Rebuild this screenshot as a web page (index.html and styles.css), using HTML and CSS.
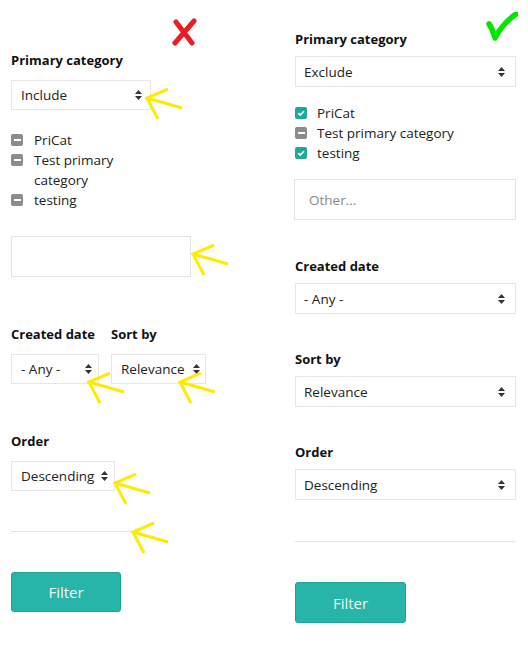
FILE: index.html
```html
<!DOCTYPE html>
<html>
<head>
<meta charset="utf-8">
<link rel="stylesheet" href="styles.css">
</head>
<body>
<div class="page">
  <div class="col col-bad">
    <div class="label">Primary category</div>
    <div class="select sel-include"><span>Include</span><svg class="updown" viewBox="0 0 7 10"><polygon points="0,4 3.5,0 7,4"/><polygon points="0,6 3.5,10 7,6"/></svg></div>
    <ul class="checks checks-bad">
      <li><span class="cb cb-mixed"></span><span>PriCat</span></li>
      <li><span class="cb cb-mixed"></span><span>Test primary category</span></li>
      <li><span class="cb cb-mixed"></span><span>testing</span></li>
    </ul>
    <div class="input input-bad"></div>
    <div class="pair">
      <div class="group">
        <div class="label">Created date</div>
        <div class="select sel-any"><span>- Any -</span><svg class="updown" viewBox="0 0 7 10"><polygon points="0,4 3.5,0 7,4"/><polygon points="0,6 3.5,10 7,6"/></svg></div>
      </div>
      <div class="group">
        <div class="label">Sort by</div>
        <div class="select sel-rel"><span>Relevance</span><svg class="updown" viewBox="0 0 7 10"><polygon points="0,4 3.5,0 7,4"/><polygon points="0,6 3.5,10 7,6"/></svg></div>
      </div>
    </div>
    <div class="label label-order-bad">Order</div>
    <div class="select sel-desc"><span>Descending</span><svg class="updown" viewBox="0 0 7 10"><polygon points="0,4 3.5,0 7,4"/><polygon points="0,6 3.5,10 7,6"/></svg></div>
    <div class="rule rule-bad"></div>
    <button class="btn btn-bad">Filter</button>
  </div>

  <div class="col col-good">
    <div class="label">Primary category</div>
    <div class="select sel-full"><span>Exclude</span><svg class="updown" viewBox="0 0 7 10"><polygon points="0,4 3.5,0 7,4"/><polygon points="0,6 3.5,10 7,6"/></svg></div>
    <ul class="checks checks-good">
      <li><span class="cb cb-checked"><svg viewBox="0 0 12 12"><path d="M3.2 6.2 L5.2 8.1 L8.9 4.2"/></svg></span><span>PriCat</span></li>
      <li><span class="cb cb-mixed"></span><span>Test primary category</span></li>
      <li><span class="cb cb-checked"><svg viewBox="0 0 12 12"><path d="M3.2 6.2 L5.2 8.1 L8.9 4.2"/></svg></span><span>testing</span></li>
    </ul>
    <div class="input input-good">Other...</div>
    <div class="label label-gap">Created date</div>
    <div class="select sel-full"><span>- Any -</span><svg class="updown" viewBox="0 0 7 10"><polygon points="0,4 3.5,0 7,4"/><polygon points="0,6 3.5,10 7,6"/></svg></div>
    <div class="label label-gap2">Sort by</div>
    <div class="select sel-full"><span>Relevance</span><svg class="updown" viewBox="0 0 7 10"><polygon points="0,4 3.5,0 7,4"/><polygon points="0,6 3.5,10 7,6"/></svg></div>
    <div class="label label-gap2">Order</div>
    <div class="select sel-full"><span>Descending</span><svg class="updown" viewBox="0 0 7 10"><polygon points="0,4 3.5,0 7,4"/><polygon points="0,6 3.5,10 7,6"/></svg></div>
    <div class="rule rule-good"></div>
    <button class="btn btn-good">Filter</button>
  </div>

  <svg class="mark mark-x" viewBox="0 0 25 28"><path d="M4 4 L20 25"/><path d="M22 3 L3 25"/></svg>
  <svg class="mark mark-check" viewBox="0 0 32 30"><path d="M3 12 Q6 16 9 26 Q16 12 30 2"/></svg>

  <svg class="arrow a1" viewBox="0 0 38 32"><path d="M23 1 L2 10 L37 20 M2 10 L13 31"/></svg>
  <svg class="arrow a2" viewBox="0 0 38 32"><path d="M23 1 L2 10 L37 20 M2 10 L13 31"/></svg>
  <svg class="arrow a3" viewBox="0 0 38 32"><path d="M23 1 L2 10 L37 20 M2 10 L13 31"/></svg>
  <svg class="arrow a4" viewBox="0 0 38 32"><path d="M23 1 L2 10 L37 20 M2 10 L13 31"/></svg>
  <svg class="arrow a5" viewBox="0 0 38 32"><path d="M23 1 L2 10 L37 20 M2 10 L13 31"/></svg>
  <svg class="arrow a6" viewBox="0 0 38 32"><path d="M23 1 L2 10 L37 20 M2 10 L13 31"/></svg>
</div>
</body>
</html>
```

FILE: styles.css
```css
* { box-sizing: border-box; }
html, body { margin: 0; padding: 0; background: #fff; }
body {
  font-family: "Open Sans", "Noto Sans", sans-serif;
  font-size: 13px;
  color: #222;
}
.page {
  position: relative;
  width: 528px;
  height: 657px;
  display: grid;
  grid-template-columns: 264px 264px;
}
.col {
  display: flex;
  flex-direction: column;
  align-items: flex-start;
}
.col-bad { padding: 50px 0 0 11px; }
.col-good { padding: 29px 12px 0 31px; }

.label {
  font-weight: 700;
  font-size: 13px;
  line-height: 20px;
  color: #111;
  margin-bottom: 10px;
}
.col-good .label { margin-bottom: 7px; }

.select {
  display: flex;
  align-items: center;
  justify-content: space-between;
  height: 30px;
  border: 1px solid #e6e6e6;
  background: #fff;
  padding: 0 6px 0 9px;
  font-size: 13.5px;
  color: #222;
  gap: 4px;
}
.updown { width: 7px; height: 10px; fill: #333; flex: none; }
.sel-include { width: 140px; padding-right: 8px; }
.sel-any { width: 88px; }
.sel-rel { width: 95px; padding-right: 5px; }
.sel-desc { width: 104px; }
.sel-full { width: 221px; height: 31px; padding: 0 10px 0 8px; }

.checks {
  list-style: none;
  margin: 0;
  padding: 0;
}
.checks li {
  display: flex;
  align-items: flex-start;
  line-height: 20px;
  font-size: 13.5px;
}
.checks .cb { margin-top: 4px; }
.checks-bad { margin-top: 20px; width: 120px; }
.checks-bad li { gap: 11px; }
.checks-good { margin-top: 16px; }
.checks-good li { gap: 10px; }

.cb {
  flex: none;
  width: 12px;
  height: 12px;
  border-radius: 2px;
  display: flex;
  align-items: center;
  justify-content: center;
}
.cb-mixed { background: #8c8c8c; }
.cb-mixed::after {
  content: "";
  width: 7px;
  height: 2px;
  background: #fff;
}
.cb-checked { background: #1fa79a; }
.cb-checked svg { width: 12px; height: 12px; fill: none; stroke: #fff; stroke-width: 1.6; }

.input {
  border: 1px solid #e3e3e3;
  height: 41px;
  background: #fff;
}
.input-bad { width: 180px; margin-top: 26px; }
.input-good {
  width: 222px;
  margin-top: 16px;
  margin-left: -1px;
  padding: 0 14px;
  display: flex;
  align-items: center;
  color: #888;
  font-size: 13.5px;
}

.pair {
  display: grid;
  grid-template-columns: 100px auto;
  margin-top: 47px;
}
.label-order-bad { margin-top: 47px; }
.label-gap { margin-top: 36px; }
.label-gap2 { margin-top: 35px; }

.rule { height: 1px; background: #e2e2e2; }
.rule-bad { width: 120px; margin-top: 40px; }
.rule-good { width: 220px; margin-top: 41px; }

.btn {
  font-family: inherit;
  font-size: 15px;
  color: #f4f4f4;
  background: #26b5a8;
  border: 1px solid #1ea497;
  border-radius: 3px;
  cursor: pointer;
}
.btn-bad { width: 110px; height: 40px; margin-top: 40px; }
.btn-good { width: 111px; height: 41px; margin-top: 40px; }

.mark { position: absolute; fill: none; stroke-linecap: round; stroke-linejoin: round; }
.mark-x { left: 172px; top: 18px; width: 25px; height: 28px; stroke: #ed1c24; stroke-width: 5; }
.mark-check { left: 486px; top: 12px; width: 32px; height: 30px; stroke: #00e600; stroke-width: 5.5; }

.arrow {
  position: absolute;
  width: 38px;
  height: 32px;
  fill: none;
  stroke: #ffeb00;
  stroke-width: 3;
  stroke-linecap: butt;
}
.a1 { left: 145px; top: 88px; }
.a2 { left: 191px; top: 244px; }
.a3 { left: 87px; top: 372px; }
.a4 { left: 178px; top: 372px; }
.a5 { left: 113px; top: 473px; }
.a6 { left: 131px; top: 522px; }
```
